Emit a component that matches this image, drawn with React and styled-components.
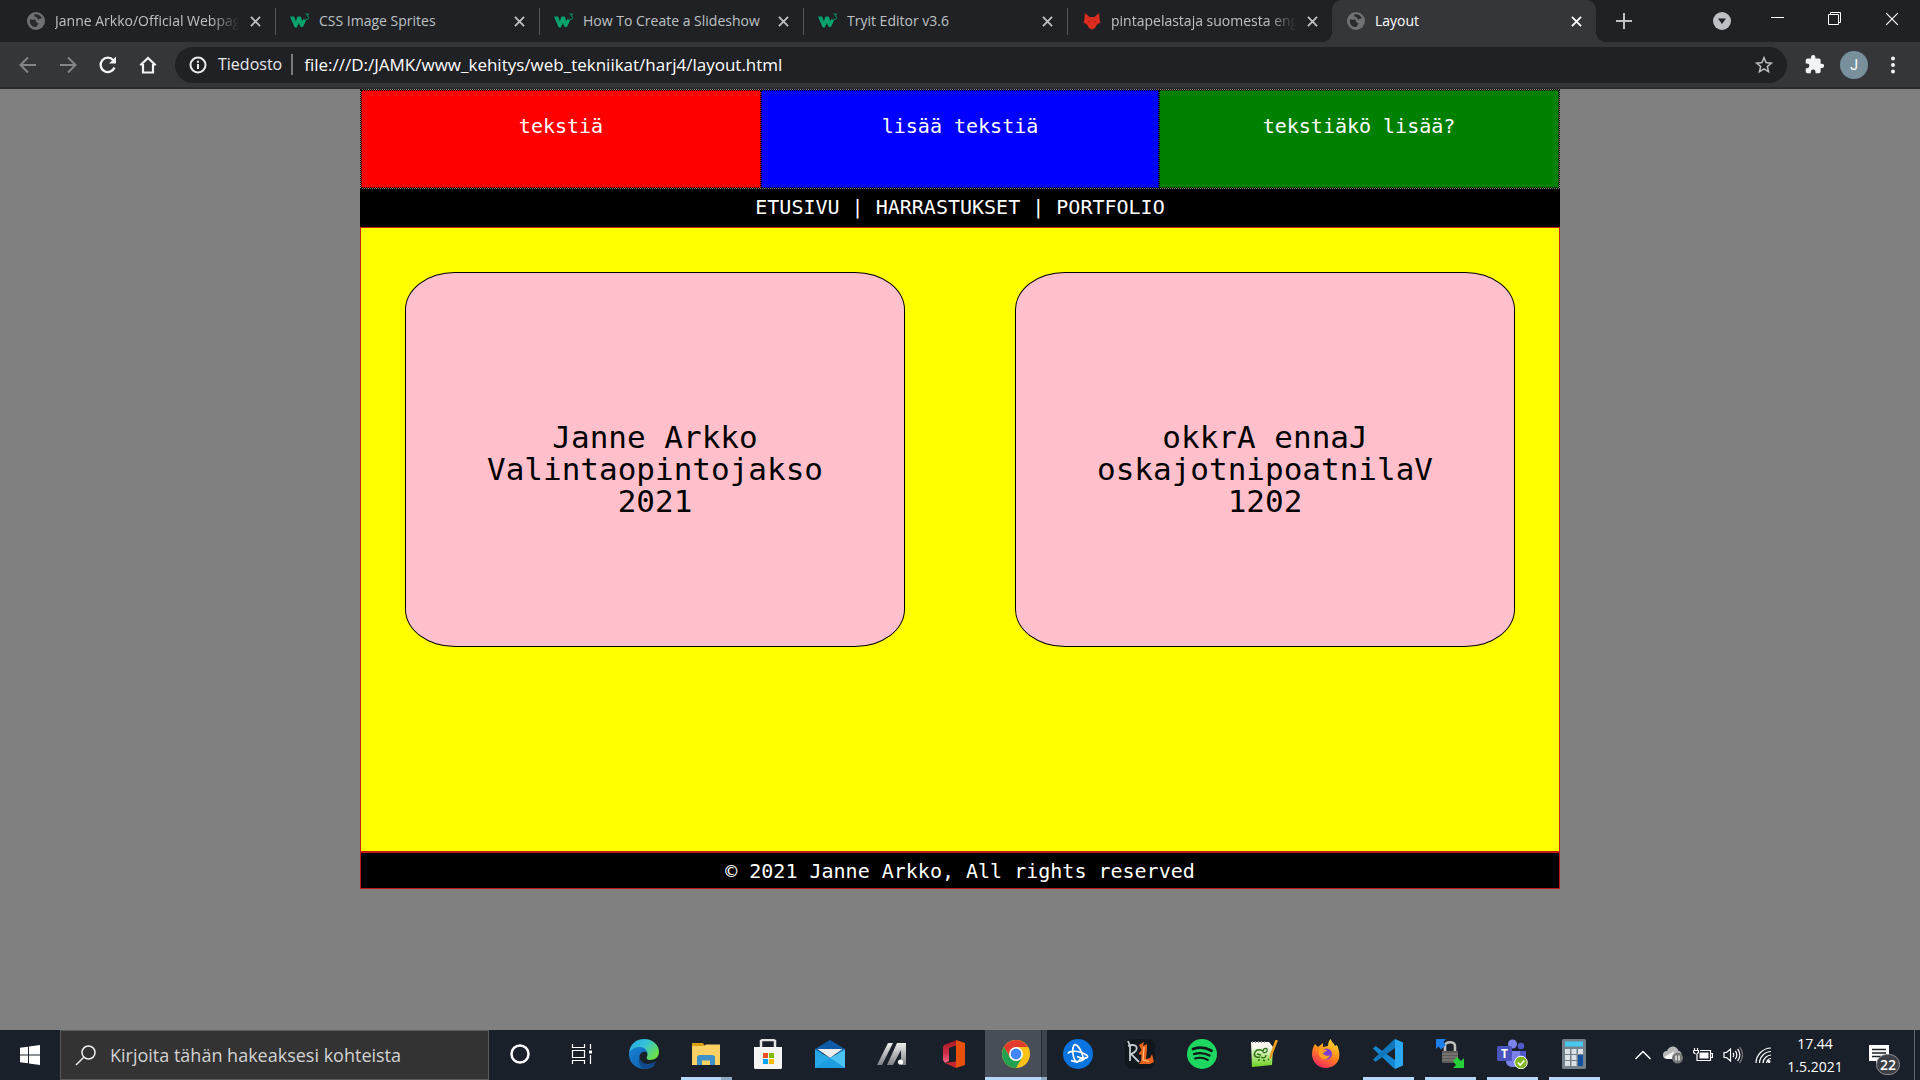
import React from "react";
import styled, { createGlobalStyle, css } from "styled-components";

const UI = `"Open Sans", "Noto Sans", sans-serif`;
const MONO = `"DejaVu Sans Mono", "Liberation Mono", monospace`;

const GlobalStyle = createGlobalStyle`
  *, *::before, *::after { box-sizing: border-box; }
  body { margin: 0; background: #808080; font-family: ${UI}; }
  button { border: 0; padding: 0; margin: 0; background: none; color: inherit; font: inherit; }
  svg { display: block; flex: none; }
`;

const Screen = styled.div`
  display: flex;
  flex-direction: column;
  min-height: 100vh;
`;

/* ---------- browser frame ---------- */

const Browser = styled.header`
  background: #202124;
  border-bottom: 2px solid #2a2b2e;
`;

const TabStrip = styled.div`
  display: flex;
  align-items: stretch;
  height: 42px;
  padding-left: 12px;
`;

const Tab = styled.div`
  position: relative;
  display: flex;
  align-items: center;
  flex: 0 1 264px;
  min-width: 0;
  padding: 0 10px 0 14px;
  color: ${(p) => (p.$active ? "#ffffff" : "#bdc1c6")};
  border-right: ${(p) => (p.$plain ? "0" : "1px solid transparent")};
  border-image: linear-gradient(transparent 9px, #56585c 9px, #56585c 34px, transparent 34px) 1;
  ${(p) =>
    p.$active &&
    css`
      background: #35363a;
      border-image: none;
      border-radius: 10px 10px 0 0;
      &::before,
      &::after {
        content: "";
        position: absolute;
        bottom: 0;
        width: 10px;
        height: 10px;
      }
      &::before {
        left: -10px;
        background: radial-gradient(circle at 0 0, transparent 10px, #35363a 10px);
      }
      &::after {
        right: -10px;
        background: radial-gradient(circle at 100% 0, transparent 10px, #35363a 10px);
      }
    `}
`;

const TabTitle = styled.button`
  display: grid;
  grid-template-columns: 20px minmax(0, 1fr);
  align-items: center;
  justify-items: center;
  gap: 9px;
  flex: 1;
  min-width: 0;
  height: 100%;
  font-size: 14px;
  line-height: 20px;
  text-align: left;
`;

const TabLabel = styled.span`
  justify-self: stretch;
  overflow: hidden;
  white-space: nowrap;
  mask-image: ${(p) => (p.$fade ? "linear-gradient(to right, #000 calc(100% - 28px), transparent)" : "none")};
`;

const TabClose = styled.button`
  display: grid;
  place-items: center;
  width: 20px;
  height: 20px;
  margin-left: 6px;
`;

const NewTab = styled.button`
  width: 56px;
  display: grid;
  place-items: center;
  color: #bdc1c6;
`;

const WindowControls = styled.div`
  display: flex;
  margin-left: auto;
  color: #ffffff;
`;

const TabSearch = styled.button`
  display: grid;
  place-items: center;
  width: 54px;
`;

const WindowButton = styled.button`
  display: grid;
  place-items: center;
  width: 57px;
  height: 37px;
`;

const Toolbar = styled.div`
  display: flex;
  align-items: center;
  height: 45px;
  padding: 0 16px 0 8px;
  background: #35363a;
`;

const ToolButton = styled.button`
  display: grid;
  place-items: center;
  width: 40px;
  height: 36px;
  color: ${(p) => (p.$dim ? "#85868a" : "#f1f3f4")};
`;

const AddressBar = styled.form`
  display: flex;
  align-items: center;
  flex: 1;
  height: 36px;
  margin: 0 7px;
  padding: 0 12px 0 14px;
  border-radius: 18px;
  background: #202124;
`;

const Scheme = styled.span`
  display: flex;
  align-items: center;
  gap: 11px;
  padding-right: 9px;
  border-right: 2px solid #77797d;
  color: #e8eaed;
  font-size: 16px;
  line-height: 21px;
`;

const Address = styled.input`
  flex: 1;
  min-width: 0;
  border: 0;
  padding: 0 0 0 11px;
  outline: 0;
  background: none;
  color: #ffffff;
  font: 17px/24px ${UI};
`;

const BarButton = styled.button`
  display: grid;
  place-items: center;
  width: 22px;
  height: 30px;
  color: #bdc1c6;
`;

const MenuButton = styled(BarButton)`
  margin-left: 8px;
  color: #f1f3f4;
`;

const Avatar = styled.span`
  display: grid;
  place-items: center;
  width: 28px;
  height: 28px;
  border-radius: 50%;
  background: #78909c;
  color: #ffffff;
  font: 14px/20px Roboto, sans-serif;
`;

/* ---------- web page ---------- */

const Viewport = styled.div`
  flex: 1;
  background: #808080;
  font: 20px/20px ${MONO};
`;

const Container = styled.div`
  max-width: 1200px;
  margin: 0 auto;
  color: #ffffff;
  text-align: center;
`;

const Banner = styled.div`
  display: grid;
  grid-template-columns: 1fr 398px 1fr;
  min-height: 100px;
  border: 1px dotted #000000;
`;

const BannerBox = styled.div`
  padding: 25px 20px;
  border: 1px dotted #000000;
  background: ${(p) => p.$color};
`;

const Menu = styled.nav`
  padding: 8px 8px 10px;
  background: #000000;
  white-space: pre;
`;

const MenuLink = styled.a`
  color: #ffffff;
  text-decoration: none;
`;

const Content = styled.main`
  display: flex;
  align-items: flex-start;
  justify-content: space-between;
  min-height: 625px;
  padding: 44px;
  border: 1px solid #c82010;
  background: #ffff00;
`;

const Card = styled.article`
  width: 500px;
  min-height: 375px;
  padding: 148px 20px 20px;
  border: 1px solid #000000;
  border-radius: 10%;
  background: #ffc0cb;
  color: #000000;
`;

const CardText = styled.p`
  margin: 0;
  font-size: 31px;
  line-height: 32px;
`;

const Footer = styled.footer`
  padding: 9px 8px 8px;
  border: 1px solid #c01818;
  background: #000000;
`;

const Copyright = styled.p`
  margin: 0;
  line-height: 18px;
`;

/* ---------- desktop taskbar ---------- */

const Taskbar = styled.div`
  display: flex;
  height: 50px;
  background: #1a2029;
  color: #ffffff;
`;

const Start = styled.button`
  display: grid;
  place-items: center;
  width: 60px;
`;

const Search = styled.label`
  display: flex;
  align-items: center;
  gap: 14px;
  width: 429px;
  padding-left: 14px;
  border: 1px solid #5b5b5b;
  background: #333333;
`;

const SearchInput = styled.input`
  flex: 1;
  min-width: 0;
  border: 0;
  padding: 0;
  outline: 0;
  background: none;
  font: 18px/26px ${UI};
  &::placeholder { color: #d2d2d2; opacity: 1; }
`;

const AppButton = styled.button`
  display: grid;
  grid-template-rows: 47px 3px;
  justify-items: center;
  align-items: center;
  width: 62px;
`;

const Running = styled.span`
  grid-row: 2;
  width: 51px;
  height: 3px;
  background: ${(p) => (p.$stacked ? "linear-gradient(to right, #b3d8fb 40px, #8fa9c2 40px)" : "#b3d8fb")};
`;

const ActiveApp = styled(AppButton)`
  background: linear-gradient(to right, #474e57 56px, #222932 56px, #222932 57px, #3c434c 57px);
  ${Running} {
    width: 100%;
    background: linear-gradient(to right, #b3d8fb 56px, #8fa9c2 56px);
  }
`;

const Tray = styled.div`
  display: flex;
  align-items: center;
  margin-left: auto;
`;

const TrayButton = styled.button`
  display: grid;
  place-items: center;
  width: 30px;
  height: 50px;
`;

const Clock = styled.time`
  width: 58px;
  margin-left: 8px;
  text-align: center;
  font-size: 14px;
  line-height: 23px;
`;

const Notifications = styled.button`
  position: relative;
  display: grid;
  place-items: center;
  width: 70px;
  height: 50px;
`;

const Count = styled.span`
  position: absolute;
  left: 32px;
  top: 24px;
  width: 24px;
  height: 21px;
  border: 1px solid #8d9095;
  border-radius: 11px;
  background: #3d4147;
  font-size: 14px;
  font-weight: 600;
  line-height: 19px;
  text-align: center;
`;

const ShowDesktop = styled.button`
  width: 6px;
  height: 50px;
  border-left: 1px solid #60656b;
`;

/* ---------- icons ---------- */

const Globe = () => (
  <svg width="18" height="18" viewBox="0 0 18 18">
    <circle cx="9" cy="9" r="9" fill="#6f7175" />
    <path d="M3 7c2.500 2 4-.2 5.500.8s-.8 2.300 1.500 2.700 1 2.500-.8 4.500C4.500 15.500 2 11.500 3 7zM7.500 2.600c3-1 6.500 1 7.500 4-1.500-1-2 .9-3.500.8-1.200 0-.8-2-2.500-2.300S6.500 4 7.500 2.600z" fill="#2b2c30" />
  </svg>
);

const W3 = () => (
  <svg width="20" height="18" viewBox="0 0 20 18">
    <path d="M0 4.500h4.200l1.600 4.700 1.700-4.700h3.200l1.700 4.700 1.100-2.500 2.600 1.800-3.200 6.500h-2.300L8.800 11l-2 4.500H4.700z" fill="#04a36b" />
    <path d="M15.500 2h3l-1.500 2c2.300 0 2 3.500-.2 3.500-.9 0-1.400-.5-1.600-1" fill="none" stroke="#04a36b" strokeWidth="1" />
  </svg>
);

const Fox = () => (
  <svg width="18" height="18" viewBox="0 0 18 18">
    <path d="M2 1l4.500 4h5L16 1l.8 7.500.7 2-3.500 2-2 3.500-3 1.500L6 16l-2-3.500-3.500-2 .7-2z" fill="#dc2b1f" />
    <path d="M4.500 8.500l3 1.500-1.700.6zM13.500 8.500l-3 1.500 1.700.6z" fill="#a81c14" />
  </svg>
);

const Cross = ({ size = 11, width = 2 }) => (
  <svg width={size} height={size} viewBox="0 0 12 12" stroke="currentColor" strokeWidth={width}>
    <path d="M1 1l10 10M11 1L1 11" />
  </svg>
);

const Back = () => (
  <svg width="18" height="18" viewBox="0 0 18 18" fill="none" stroke="currentColor" strokeWidth="2">
    <path d="M17 9H2M9 1.500L1.500 9 9 16.500" />
  </svg>
);

const Forward = () => (
  <svg width="18" height="18" viewBox="0 0 18 18" fill="none" stroke="currentColor" strokeWidth="2">
    <path d="M1 9h15M9 1.500L16.500 9 9 16.500" />
  </svg>
);

const Reload = () => (
  <svg width="20" height="20" viewBox="0 0 20 20" fill="none" stroke="currentColor" strokeWidth="2.300">
    <path d="M16.500 12.500a7.200 7.200 0 1 1-1.200-7.300L17 7" />
    <path d="M18 1.500v7h-7z" fill="currentColor" stroke="none" />
  </svg>
);

const Home = () => (
  <svg width="18" height="18" viewBox="0 0 18 18" fill="none" stroke="currentColor" strokeWidth="2.200">
    <path d="M1.300 9.300L9 2l7.700 7.300M4 8v8.500h10V8" />
  </svg>
);

const Info = () => (
  <svg width="18" height="18" viewBox="0 0 18 18" fill="none" stroke="#e8eaed" strokeWidth="2">
    <circle cx="9" cy="9" r="7.500" />
    <path d="M9 8v5M9 4.800v2" />
  </svg>
);

const Star = () => (
  <svg width="22" height="22" viewBox="0 0 24 24" fill="currentColor">
    <path d="M22 9.240l-7.190-.62L12 2 9.190 8.630 2 9.240l5.460 4.730L5.820 21 12 17.270 18.180 21l-1.630-7.030L22 9.240zM12 15.400l-3.760 2.270 1-4.280-3.320-2.880 4.380-.38L12 6.100l1.710 4.040 4.380.38-3.320 2.880 1 4.280L12 15.400z" />
  </svg>
);

const Puzzle = () => (
  <svg width="21" height="21" viewBox="0 0 24 24" fill="currentColor">
    <path d="M20.500 11H19V7c0-1.100-.9-2-2-2h-4V3.500a2.500 2.500 0 0 0-5 0V5H4c-1.100 0-2 .9-2 2v3.800h1.500a2.700 2.700 0 0 1 0 5.400H2V20c0 1.100.9 2 2 2h3.800v-1.500a2.700 2.700 0 0 1 5.400 0V22H17c1.100 0 2-.9 2-2v-4h1.500a2.500 2.500 0 0 0 0-5z" />
  </svg>
);

const Dots = () => (
  <svg width="6" height="18" viewBox="0 0 6 18" fill="currentColor">
    <circle cx="3" cy="2.500" r="2" />
    <circle cx="3" cy="9" r="2" />
    <circle cx="3" cy="15.500" r="2" />
  </svg>
);

const TabSearchIcon = () => (
  <svg width="18" height="18" viewBox="0 0 18 18">
    <circle cx="9" cy="9" r="9" fill="#bdc1c6" />
    <path d="M5 6.500h8L9 12z" fill="#202124" />
  </svg>
);

const WindowsLogo = () => (
  <svg width="20" height="20" viewBox="0 0 20 20" fill="#ffffff">
    <path d="M0 2.800L8 1.700v7.800H0zM9 1.500L20 0v9.500H9zM0 10.500h8v7.800l-8-1.100zM9 10.500h11V20L9 18.500z" />
  </svg>
);

const Magnifier = () => (
  <svg width="21" height="21" viewBox="0 0 21 21" fill="none" stroke="#f0f0f0" strokeWidth="1.500">
    <circle cx="13.500" cy="7.500" r="6.500" />
    <path d="M9 12L1 20" />
  </svg>
);

const Cortana = () => (
  <svg width="20" height="20" viewBox="0 0 20 20">
    <circle cx="10" cy="10" r="8.500" fill="none" stroke="#ffffff" strokeWidth="2.500" />
  </svg>
);

const TaskView = () => (
  <svg width="22" height="20" viewBox="0 0 22 20" fill="none" stroke="#ffffff" strokeWidth="1.200">
    <path d="M1.500 0v3.500h12V0M1.500 20v-3.500h12V20M1.500 6.500h12v7h-12zM19.500 0v5M19.500 11v9" />
    <path d="M18 6.500h3v3h-3z" fill="#fff" stroke="none" />
  </svg>
);

const Edge = () => (
  <svg width="30" height="30" viewBox="0 0 30 30">
    <defs>
      <linearGradient id="edgeTop" x1="0" y1="0" x2="1" y2=".6">
        <stop offset="0" stopColor="#1fa6e0" />
        <stop offset=".5" stopColor="#35c1d8" />
        <stop offset="1" stopColor="#6be04a" />
      </linearGradient>
      <linearGradient id="edgeLow" x1="0" y1="0" x2="1" y2="1">
        <stop offset="0" stopColor="#1683d4" />
        <stop offset="1" stopColor="#0c59a4" />
      </linearGradient>
    </defs>
    <path d="M0 14C1 5 7 0 15 0c9 0 15 6 15 13 0 5-4 8-9 8-3 0-4-1.500-3-3 2-5-2-9-7-9-5 0-9 2-11 5z" fill="url(#edgeTop)" />
    <path d="M0 14c2-4 6-6 11-6 4 0 7 3 7.500 6-4-3-8 0-8 4 0 6 6 10 12 9 2-.5 3-1 4.500-2-3 3.500-7 5-11 5C6 30-.5 23 0 14z" fill="url(#edgeLow)" />
    <path d="M10.500 18c0 5 6 8 11 6.500 3-.7 5-2 6-2.500-2 4-6 7-11 8-5-1-8-6-6-12z" fill="#114a8b" />
  </svg>
);

const Explorer = () => (
  <svg width="28" height="24" viewBox="0 0 28 24">
    <path d="M0 1h11l2 3H0z" fill="#d9a012" />
    <path d="M0 4h12l2-1.500h14V23H0z" fill="#fbd163" />
    <path d="M5 23V14.500L7 13h14l2 1.500V23h-5v-4.500h-8V23z" fill="#3f92c9" />
  </svg>
);

const Store = () => (
  <svg width="30" height="30" viewBox="0 0 30 30">
    <path d="M8 9V2l1.500-1h11L22 2v7" fill="none" stroke="#e3e3e3" strokeWidth="2.500" />
    <path d="M1 8h28v21l-1 1H2l-1-1z" fill="#f4f4f4" />
    <path d="M10 14h5v5h-5z" fill="#f25022" />
    <path d="M16 14h5v5h-5z" fill="#7fba00" />
    <path d="M10 20h5v5h-5z" fill="#00a4ef" />
    <path d="M16 20h5v5h-5z" fill="#ffb900" />
  </svg>
);

const Mail = () => (
  <svg width="30" height="28" viewBox="0 0 30 28">
    <path d="M0 9L15 0l15 9v4H0z" fill="#0f5ba8" />
    <path d="M2.500 9h25L15 18z" fill="#eeeeee" />
    <path d="M0 9.500L15 18l15-8.500V28H0z" fill="#27a9e8" />
    <path d="M30 9.500V28L15 18z" fill="#4cc2f3" />
    <path d="M0 28h30L15 18z" fill="#1e9ce0" />
  </svg>
);

const Ma = () => (
  <svg width="30" height="22" viewBox="0 0 30 22">
    <defs>
      <linearGradient id="steel" x1="0" y1="0" x2="0" y2="1">
        <stop offset="0" stopColor="#eeeeee" />
        <stop offset="1" stopColor="#7e8287" />
      </linearGradient>
    </defs>
    <path d="M0 22L11 0h5L5 22zM10 22L20 0h9v22h-5V7L16 22z" fill="url(#steel)" />
    <circle cx="23.500" cy="19" r="2.600" fill="#ffffff" />
  </svg>
);

const Office = () => (
  <svg width="24" height="28" viewBox="0 0 24 28">
    <defs>
      <linearGradient id="officeL" x1="0" y1="0" x2="0" y2="1">
        <stop offset="0" stopColor="#a3161c" />
        <stop offset=".6" stopColor="#d6314b" />
        <stop offset="1" stopColor="#f06b8a" />
      </linearGradient>
    </defs>
    <path d="M15 0L2 5l-1 2v13l2 3 4-2V8l8-3z" fill="url(#officeL)" />
    <path d="M14 0l9 3v22l-9 3z" fill="#e8500c" />
    <path d="M3 23l11-1.500V28z" fill="#c9252d" />
  </svg>
);

const Chrome = () => (
  <svg width="28" height="28" viewBox="0 0 28 28">
    <circle cx="14" cy="14" r="14" fill="#fbc116" />
    <path d="M1.900 7A14 14 0 0 1 26.100 7H14L8 17.500z" fill="#e33b2e" />
    <path d="M1.900 7A14 14 0 0 0 14 28l6-10.500H8z" fill="#1fa150" />
    <circle cx="14" cy="14" r="7" fill="#ffffff" />
    <circle cx="14" cy="14" r="5.400" fill="#4285f4" />
  </svg>
);

const BattleNet = () => (
  <svg width="30" height="30" viewBox="0 0 30 30" fill="none" stroke="#ffffff" strokeWidth="1.700">
    <circle cx="15" cy="15" r="15" fill="#0a74e0" stroke="none" />
    <path d="M11 6c3-2 8 6 9 12 .5 3-1 3-4 0" />
    <path d="M11 6c-2 3-1.500 11 1 15.500 1.500 2.500 3.500 2 5-1.500" />
    <path d="M5 14.500c1-2.500 8-3 13-1 5 1.500 8 4 6 5-2 1.500-7 .5-10-1" />
    <path d="M23 18.500c-3 3.500-9 5.500-15 3" />
  </svg>
);

const Rl = () => (
  <svg width="30" height="30" viewBox="0 0 30 30">
    <rect width="30" height="30" rx="7" fill="#10171d" />
    <path d="M3 2l2 5v15M3 7c10-4 12 5 3 8l8 8" fill="none" stroke="#c7cdd0" strokeWidth="1.800" />
    <path d="M14 6l5-3-1 4 4-2v5l-1 10 4-1 2-4 2 8-4 2H14l2-3 .5-6-3-1 3-4z" fill="#e8621e" />
    <path d="M19 8l-1 13 6 1.500" fill="none" stroke="#ffc27a" strokeWidth="1.200" />
  </svg>
);

const Spotify = () => (
  <svg width="30" height="30" viewBox="0 0 30 30" fill="none" stroke="#10171d" strokeLinecap="round">
    <circle cx="15" cy="15" r="15" fill="#1ed760" stroke="none" />
    <path d="M6 10c6-2 13-1.500 18.500 1.700" strokeWidth="2.800" />
    <path d="M7 15c5-1.500 11-1 15.500 1.500" strokeWidth="2.300" />
    <path d="M8 19.500c4-1.200 9-.8 12.800 1.400" strokeWidth="1.900" />
  </svg>
);

const Notepad = () => (
  <svg width="30" height="28" viewBox="0 0 30 28">
    <defs>
      <linearGradient id="page" x1="0" y1="0" x2="0" y2="1">
        <stop offset=".2" stopColor="#f7f7ef" />
        <stop offset="1" stopColor="#6cd41c" />
      </linearGradient>
    </defs>
    <path d="M2 2h18l4 5-1 18-20 2z" fill="url(#page)" />
    <path d="M3 2h15" stroke="#888" strokeWidth="2" strokeDasharray="1 2" />
    <path d="M6 12c2-3 6-2 8-1 1-4 5-3 4 0-1 2-3 2-4 1M6 12c-2 4 1 6 5 5M8 14l4 1M12 17c3 2 5 0 5-2M9 20h2M14 20l2 1M19 19l1 1" fill="none" stroke="#2f6f16" strokeWidth="1.400" />
    <path d="M28 1l-7 18 1-5 5-14z" stroke="#e89a18" fill="#e89a18" strokeWidth="1.500" />
  </svg>
);

const Firefox = () => (
  <svg width="28" height="29" viewBox="0 0 28 29">
    <defs>
      <linearGradient id="flame" x1=".8" y1="0" x2=".3" y2="1">
        <stop offset="0" stopColor="#ffe12e" />
        <stop offset=".5" stopColor="#ff8a1c" />
        <stop offset="1" stopColor="#f5245f" />
      </linearGradient>
    </defs>
    <path d="M3 5l3 3 5-4v4l5-1c0-3 1-6 3-7 0 3 3 4 4 7l2-1c3 7 3 12 1 16-3 5-8 7-12 7C6 29 0 23 0 15 0 11 1 8 3 5z" fill="url(#flame)" />
    <circle cx="14.500" cy="15" r="5.500" fill="#7a3fd0" />
    <path d="M7 11c3-2 5 0 8 0-1 2-4 2-4 4 2 1 4 3 7 1-1 4-6 6-9 3-2-2-3-5-2-8z" fill="#ffa01f" />
  </svg>
);

const VsCode = () => (
  <svg width="30" height="30" viewBox="0 0 30 30">
    <path d="M2.500 7L0 9.500 19.500 28l2.500 2V21z" fill="#1487d0" />
    <path d="M2.500 23L0 20.500 19.500 2 22 0v9z" fill="#1278be" />
    <path d="M22 0l8 3.500v23L22 30z" fill="#2aa8f2" />
  </svg>
);

const LockIcon = () => (
  <svg width="30" height="30" viewBox="0 0 30 30">
    <path d="M10 13V7c0-5 10-5 10 0v6" fill="none" stroke="#c0c0c0" strokeWidth="2.600" />
    <path d="M7 12h16v12H7z" fill="#5d5b58" />
    <path d="M7 15h16M7 18h16M7 21h16" stroke="#8d8a86" />
    <path d="M1 0h10L8.500 3 11 6 6 10.500 3.500 7.500 1 10z" fill="#1e7fea" />
    <path d="M29 29H18l3-3-3-4 4-4 4 4 3-3z" fill="#25d03a" />
  </svg>
);

const TeamsT = styled.text`
  font: 700 12px ${UI};
  fill: #ffffff;
`;

const Teams = () => (
  <svg width="32" height="30" viewBox="0 0 32 30">
    <circle cx="25" cy="7" r="3.300" fill="#5059c9" />
    <circle cx="16.500" cy="5" r="4.500" fill="#7b83eb" />
    <path d="M20 12h10v9c0 4-4 6-8 5z" fill="#5059c9" />
    <path d="M10 12h14v10c0 8-14 8-14 0z" fill="#7b83eb" />
    <rect x="1" y="7" width="15" height="15" rx="1.500" fill="#4b53bc" />
    <TeamsT x="5" y="19">T</TeamsT>
    <circle cx="25" cy="23.500" r="6.300" fill="#7eb51b" stroke="#ffffff" />
    <path d="M21.800 23.500l2.400 2.500 4.200-4.500" fill="none" stroke="#ffffff" strokeWidth="1.700" />
  </svg>
);

const Calculator = () => (
  <svg width="24" height="30" viewBox="0 0 24 30">
    <rect width="24" height="30" rx="1.500" fill="#74808a" />
    <path d="M3 2.500h18v5H3z" fill="#47c8ee" />
    <path d="M3 10h5v5H3zM9.500 10h5v5h-5zM16 10h5v5h-5zM3 16h5v5H3zM9.500 16h5v5h-5zM3 22h5v5H3zM9.500 22h5v5h-5z" fill="#dde2e6" />
    <path d="M16 16h5v11h-5z" fill="#1450a0" />
  </svg>
);

const Chevron = () => (
  <svg width="16" height="10" viewBox="0 0 16 10" fill="none" stroke="#ffffff" strokeWidth="1.500">
    <path d="M.5 9L8 1.500 15.500 9" />
  </svg>
);

const Cloud = () => (
  <svg width="20" height="18" viewBox="0 0 20 18">
    <path d="M4 13a4 4 0 0 1 0-8c2-6 10-6 11.500 0 3 0 4.500 5 2 8z" fill="#b8b8b8" />
    <path d="M1 11l9-5 8 4-3 3H4z" fill="#f3f3f3" />
    <circle cx="14.500" cy="12" r="5.500" fill="#777777" />
    <path d="M13 9.500v5M16 9.500v5" stroke="#ffffff" strokeWidth="1.300" />
  </svg>
);

const Battery = () => (
  <svg width="20" height="14" viewBox="0 0 20 14" fill="none" stroke="#ffffff" strokeWidth="1.200">
    <path d="M7 2.500h10.500v10H4V8M17.500 5.500h2v4h-2M1.500 0v2.500M4.500 0v2.500M.6 2.500h4.800v2L4 6v2.500M.6 2.500v2L2.500 6" />
    <path d="M6.500 4.500h9v6h-9z" fill="#ffffff" stroke="none" />
  </svg>
);

const Speaker = () => (
  <svg width="20" height="18" viewBox="0 0 20 18" fill="none" stroke="#ffffff" strokeWidth="1.200">
    <path d="M1 6.500h2.500L7.500 3v12l-4-3.500H1zM10 7c1 1 1 3 0 4M12.300 5c2 2 2 6 0 8" />
    <path d="M14.600 3c3 3.500 3 8.500 0 12" stroke="#ffffff" />
    <path d="M16.500 1c4 4.500 4 11.500 0 16" stroke="#777777" />
  </svg>
);

const Wifi = () => (
  <svg width="17" height="17" viewBox="0 0 17 17" fill="none" stroke="#ffffff" strokeWidth="1.200">
    <path d="M1 16C1 8 8 1 16 1M4.500 16C4.500 10 10 4.500 16 4.500M8 16c0-4 4-8 8-8" />
    <path d="M11.500 16c0-2 2-4.500 4.500-4.500" />
    <circle cx="14" cy="14.500" r="1.500" fill="#ffffff" stroke="none" />
  </svg>
);

const Message = () => (
  <svg width="20" height="20" viewBox="0 0 20 20">
    <path d="M0 0h20v16h-9l-4 4v-4H0z" fill="#ffffff" />
    <path d="M3 4.500h14M3 8h14M3 11.500h9" stroke="#1a2029" strokeWidth="1.300" />
  </svg>
);

/* ---------- data ---------- */

const tabs = [
  { title: "Janne Arkko/Official Webpage", icon: Globe, fade: true },
  { title: "CSS Image Sprites", icon: W3 },
  { title: "How To Create a Slideshow", icon: W3 },
  { title: "Tryit Editor v3.6", icon: W3 },
  { title: "pintapelastaja suomesta englantiin", icon: Fox, fade: true, plain: true },
  { title: "Layout", icon: Globe, active: true, plain: true },
];

const boxes = [
  { text: "tekstiä", color: "#ff0000" },
  { text: "lisää tekstiä", color: "#0000ff" },
  { text: "tekstiäkö lisää?", color: "#008000" },
];

const menu = ["ETUSIVU", "HARRASTUKSET", "PORTFOLIO"];

const cards = [
  ["Janne Arkko", "Valintaopintojakso", "2021"],
  ["okkrA ennaJ", "oskajotnipoatnilaV", "1202"],
];

const apps = [
  { name: "Cortana", icon: Cortana },
  { name: "Task View", icon: TaskView },
  { name: "Edge", icon: Edge },
  { name: "File Explorer", icon: Explorer, running: true, stacked: true },
  { name: "Store", icon: Store },
  { name: "Mail", icon: Mail },
  { name: "Mixed Apps", icon: Ma },
  { name: "Office", icon: Office },
  { name: "Chrome", icon: Chrome, running: true, active: true },
  { name: "Battle.net", icon: BattleNet },
  { name: "RL", icon: Rl },
  { name: "Spotify", icon: Spotify },
  { name: "Notepad++", icon: Notepad },
  { name: "Firefox", icon: Firefox },
  { name: "Visual Studio Code", icon: VsCode, running: true },
  { name: "WinSCP", icon: LockIcon, running: true },
  { name: "Teams", icon: Teams, running: true },
  { name: "Calculator", icon: Calculator, running: true },
];

const tray = [
  { name: "Hidden icons", icon: Chevron },
  { name: "OneDrive", icon: Cloud },
  { name: "Battery", icon: Battery },
  { name: "Volume", icon: Speaker },
  { name: "Network", icon: Wifi },
];

export default function App() {
  return (
    <Screen>
      <GlobalStyle />
      <Browser>
        <TabStrip>
          {tabs.map(({ title, icon: Icon, fade, active, plain }) => (
            <Tab key={title} $active={active} $plain={plain}>
              <TabTitle type="button">
                <Icon />
                <TabLabel $fade={fade}>{title}</TabLabel>
              </TabTitle>
              <TabClose type="button" aria-label={`Close ${title}`}>
                <Cross />
              </TabClose>
            </Tab>
          ))}
          <NewTab type="button" aria-label="New tab">
            <svg width="16" height="16" viewBox="0 0 16 16" stroke="currentColor" strokeWidth="2">
              <path d="M8 0v16M0 8h16" />
            </svg>
          </NewTab>
          <WindowControls>
            <TabSearch type="button" aria-label="Search tabs">
              <TabSearchIcon />
            </TabSearch>
            <WindowButton type="button" aria-label="Minimize">
              <svg width="13" height="13" viewBox="0 0 13 13" stroke="#fff">
                <path d="M0 5.500h13" />
              </svg>
            </WindowButton>
            <WindowButton type="button" aria-label="Restore">
              <svg width="13" height="13" viewBox="0 0 13 13" fill="none" stroke="#fff">
                <path d="M.5 2.500h10v10H.5zM2.500 2.500v-2h10v10h-2" />
              </svg>
            </WindowButton>
            <WindowButton type="button" aria-label="Close window">
              <Cross size={14} width={1} />
            </WindowButton>
          </WindowControls>
        </TabStrip>
        <Toolbar>
          <ToolButton type="button" $dim aria-label="Back"><Back /></ToolButton>
          <ToolButton type="button" $dim aria-label="Forward"><Forward /></ToolButton>
          <ToolButton type="button" aria-label="Reload"><Reload /></ToolButton>
          <ToolButton type="button" aria-label="Home"><Home /></ToolButton>
          <AddressBar>
            <Scheme>
              <Info />
              Tiedosto
            </Scheme>
            <Address aria-label="Address" defaultValue="file:///D:/JAMK/www_kehitys/web_tekniikat/harj4/layout.html" />
            <BarButton type="button" aria-label="Bookmark"><Star /></BarButton>
          </AddressBar>
          <ToolButton type="button" aria-label="Extensions"><Puzzle /></ToolButton>
          <ToolButton type="button" aria-label="Profile"><Avatar>J</Avatar></ToolButton>
          <MenuButton type="button" aria-label="Menu"><Dots /></MenuButton>
        </Toolbar>
      </Browser>

      <Viewport>
        <Container>
          <Banner>
            {boxes.map((b) => (
              <BannerBox key={b.text} $color={b.color}>{b.text}</BannerBox>
            ))}
          </Banner>
          <Menu>
            {menu.map((m, i) => (
              <React.Fragment key={m}>
                {i > 0 && " | "}
                <MenuLink href="#">{m}</MenuLink>
              </React.Fragment>
            ))}
          </Menu>
          <Content>
            {cards.map(([name, course, year]) => (
              <Card key={name}>
                <CardText>
                  {name}
                  <br />
                  {course}
                  <br />
                  {year}
                </CardText>
              </Card>
            ))}
          </Content>
          <Footer>
            <Copyright>© 2021 Janne Arkko, All rights reserved</Copyright>
          </Footer>
        </Container>
      </Viewport>

      <Taskbar>
        <Start type="button" aria-label="Start"><WindowsLogo /></Start>
        <Search>
          <Magnifier />
          <SearchInput aria-label="Search" placeholder="Kirjoita tähän hakeaksesi kohteista" />
        </Search>
        {apps.map(({ name, icon: Icon, running, stacked, active }) => {
          const Cell = active ? ActiveApp : AppButton;
          return (
            <Cell key={name} type="button" aria-label={name}>
              <Icon />
              {running && <Running $stacked={stacked} />}
            </Cell>
          );
        })}
        <Tray>
          {tray.map(({ name, icon: Icon }) => (
            <TrayButton key={name} type="button" aria-label={name}>
              <Icon />
            </TrayButton>
          ))}
          <Clock>
            17.44
            <br />
            1.5.2021
          </Clock>
          <Notifications type="button" aria-label="Notifications">
            <Message />
            <Count>22</Count>
          </Notifications>
          <ShowDesktop type="button" aria-label="Show desktop" />
        </Tray>
      </Taskbar>
    </Screen>
  );
}
